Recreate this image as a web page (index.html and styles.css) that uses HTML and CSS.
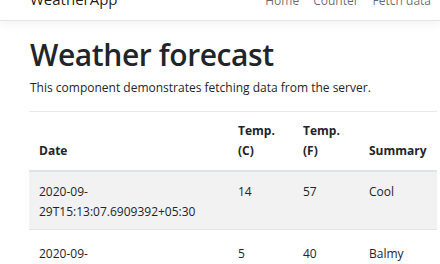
FILE: index.html
```html
<!DOCTYPE html>
<html lang="en">
<head>
<meta charset="utf-8">
<title>WeatherApp</title>
<link rel="stylesheet" href="styles.css">
</head>
<body>
<header class="navbar">
  <div class="navbar-inner">
    <a class="brand" href="#">WeatherApp</a>
    <nav class="nav">
      <a class="nav-link" href="#">Home</a>
      <a class="nav-link" href="#">Counter</a>
      <a class="nav-link" href="#">Fetch data</a>
    </nav>
  </div>
</header>
<main class="container">
  <h1 class="title">Weather forecast</h1>
  <p class="lead">This component demonstrates fetching data from the server.</p>
  <table class="table">
    <colgroup>
      <col class="col-date">
      <col class="col-c">
      <col class="col-f">
      <col class="col-sum">
    </colgroup>
    <thead>
      <tr>
        <th>Date</th>
        <th>Temp. (C)</th>
        <th>Temp. (F)</th>
        <th>Summary</th>
      </tr>
    </thead>
    <tbody>
      <tr class="striped">
        <td>2020-09-29T15:13:07.6909392+05:30</td>
        <td>14</td>
        <td>57</td>
        <td>Cool</td>
      </tr>
      <tr class="plain">
        <td>2020-09-30T15:13:07.6909392+05:30</td>
        <td>5</td>
        <td>40</td>
        <td>Balmy</td>
      </tr>
    </tbody>
  </table>
</main>
</body>
</html>
```

FILE: styles.css
```css
html, body {
  margin: 0;
  padding: 0;
  background: #fff;
  overflow: hidden;
}

body {
  font-family: "Open Sans", "Noto Sans", sans-serif;
  font-size: 12px;
  line-height: 20px;
  color: #212529;
}

.navbar {
  margin-top: -12px;
  border-bottom: 1px solid #e5e5e5;
  box-shadow: 0 3px 9px rgba(0, 0, 0, 0.05);
  padding-bottom: 9px;
}

.navbar-inner {
  display: flex;
  align-items: baseline;
  justify-content: space-between;
  padding: 0 2px 0 30px;
}

.brand {
  font-size: 15px;
  line-height: 22px;
  color: rgba(0, 0, 0, 0.9);
  text-decoration: none;
}

.nav {
  display: flex;
}

.nav-link {
  color: rgba(0, 0, 0, 0.6);
  text-decoration: none;
  padding: 0 7px;
}

.container {
  padding: 16px 3px 0 29px;
}

.title {
  margin: 0 0 5px 0;
  font-size: 30px;
  font-weight: 600;
  letter-spacing: -0.4px;
  line-height: 36px;
  padding-left: 1px;
}

.lead {
  margin: 0 0 13px 0;
  padding-left: 1px;
}

.table {
  width: 408px;
  border-collapse: collapse;
  table-layout: fixed;
}

.col-date { width: 199px; }
.col-c { width: 65px; }
.col-f { width: 66px; }
.col-sum { width: 78px; }

.table th {
  text-align: left;
  vertical-align: bottom;
  font-weight: 700;
  padding: 9px 10px;
  border-top: 1px solid #e6e8eb;
  border-bottom: 2px solid #dfe3e7;
}

.table td {
  vertical-align: top;
  padding: 10px 10px 7px 10px;
  border-top: 1px solid #e2e5e8;
}

.plain td {
  padding-top: 14px;
}

.striped td {
  background: #f2f2f2;
}
```
